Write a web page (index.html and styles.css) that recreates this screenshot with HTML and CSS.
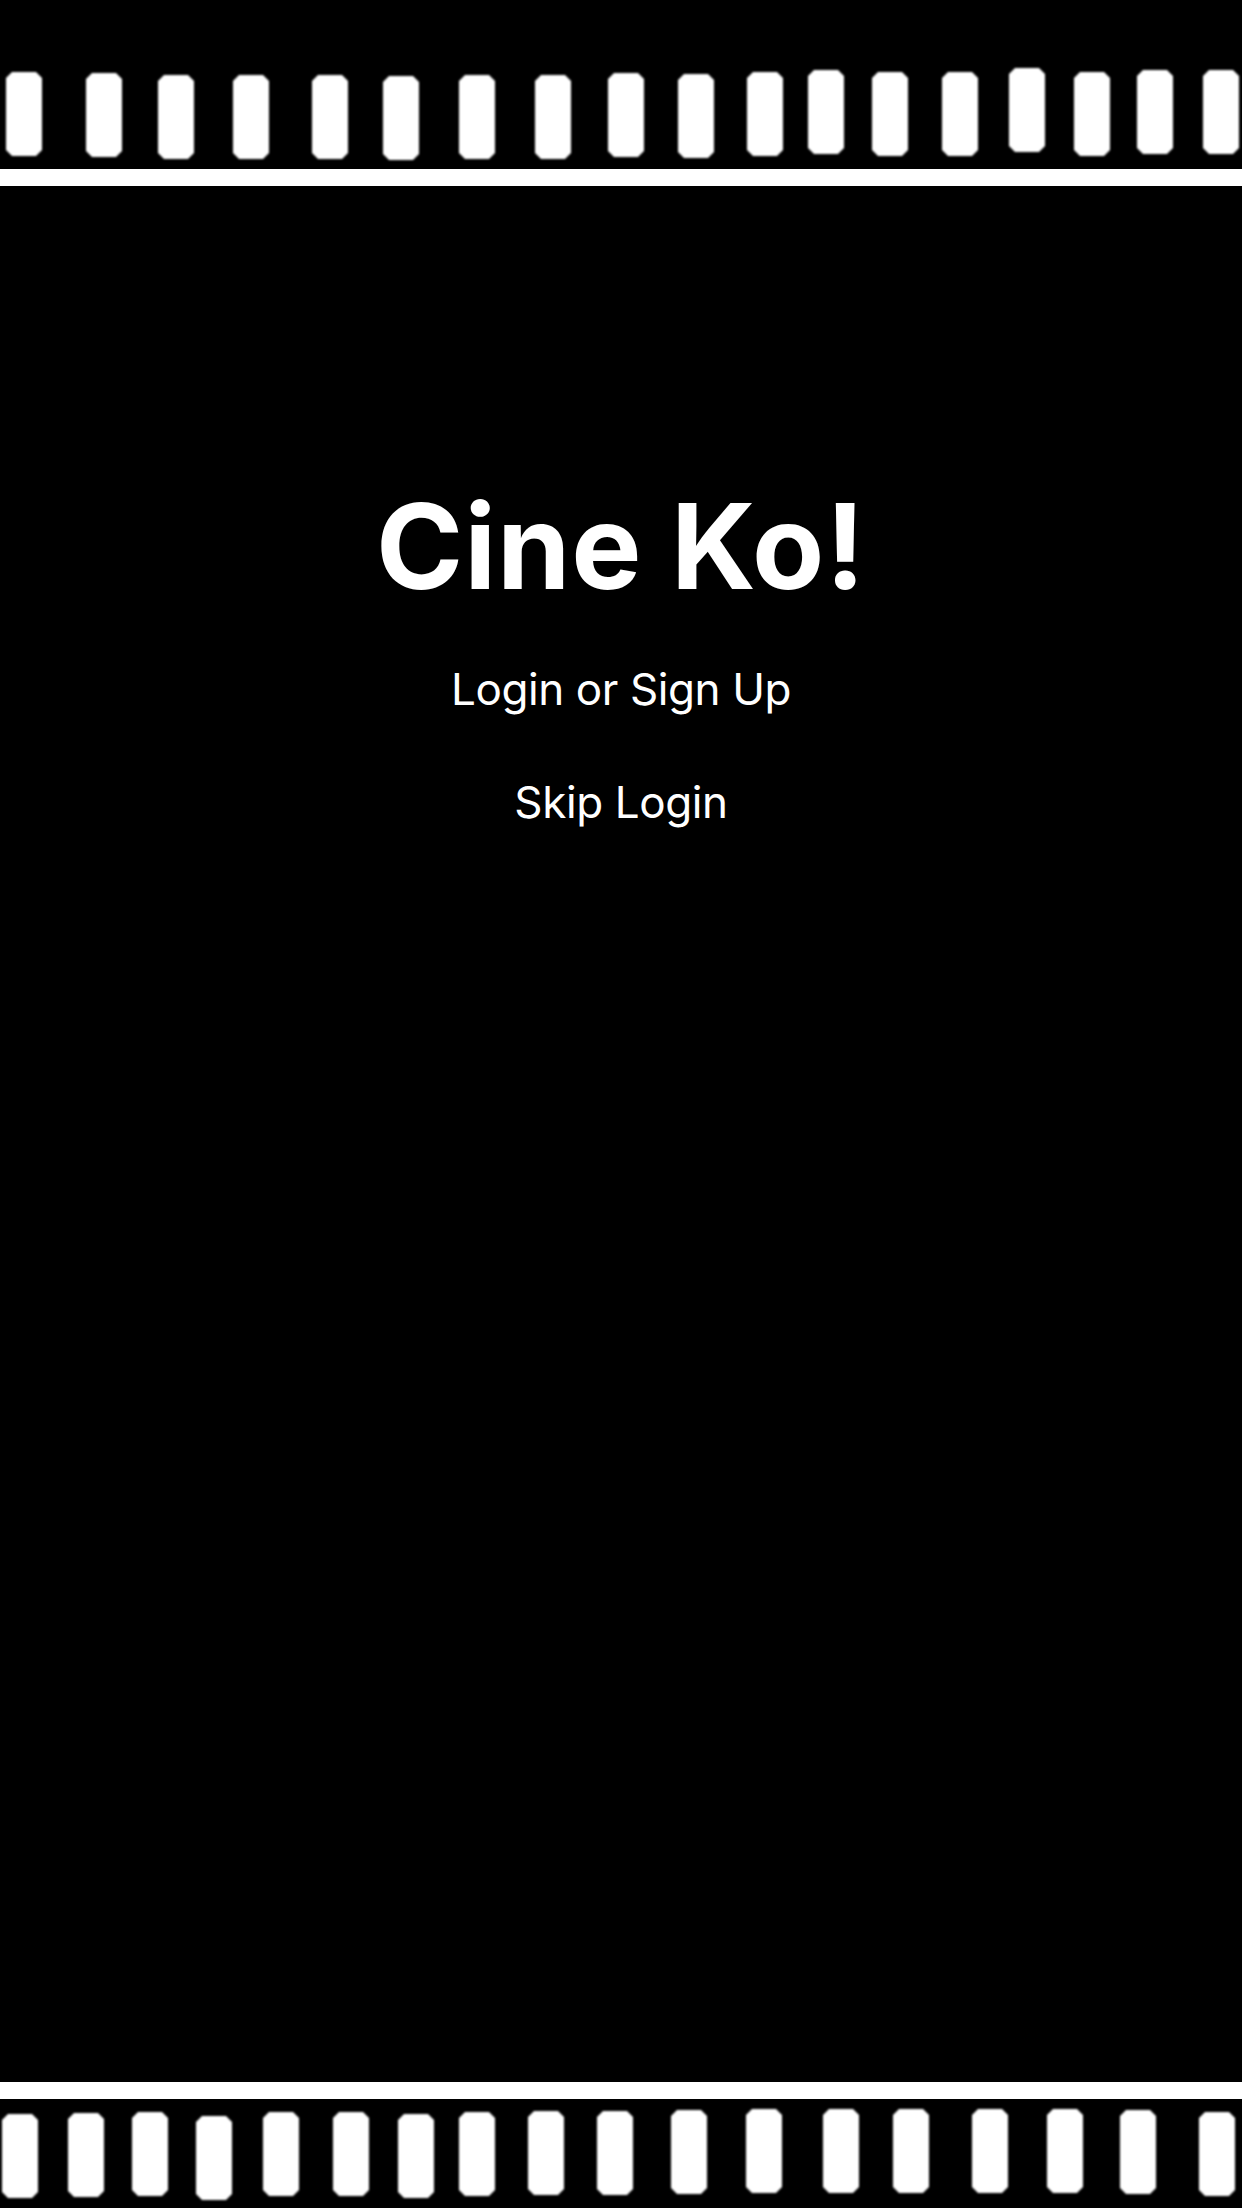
FILE: index.html
```html
<!DOCTYPE html>
<html lang="en">
<head>
<meta charset="utf-8">
<title>Cine Ko!</title>
<link rel="stylesheet" href="styles.css">
</head>
<body>
<div class="screen">
  <svg class="strip strip-top" width="1242" height="186" viewBox="0 0 1242 186" xmlns="http://www.w3.org/2000/svg">
    <defs>
      <filter id="soft" x="-10%" y="-10%" width="120%" height="120%">
        <feGaussianBlur stdDeviation="0.9"/>
      </filter>
      <polygon id="hole" points="6,0 30,0 36,6 36,78 30,84 6,84 0,78 0,6" fill="#fff"/>
    </defs>
    <g filter="url(#soft)">
      <use href="#hole" x="6" y="72"/>
      <use href="#hole" x="86" y="73"/>
      <use href="#hole" x="158" y="75"/>
      <use href="#hole" x="233" y="75"/>
      <use href="#hole" x="312" y="75"/>
      <use href="#hole" x="383" y="76"/>
      <use href="#hole" x="459" y="75"/>
      <use href="#hole" x="535" y="75"/>
      <use href="#hole" x="608" y="73"/>
      <use href="#hole" x="678" y="74"/>
      <use href="#hole" x="747" y="72"/>
      <use href="#hole" x="808" y="70"/>
      <use href="#hole" x="872" y="72"/>
      <use href="#hole" x="942" y="72"/>
      <use href="#hole" x="1009" y="68"/>
      <use href="#hole" x="1074" y="72"/>
      <use href="#hole" x="1137" y="70"/>
      <use href="#hole" x="1203" y="70"/>
    </g>
    <rect x="0" y="169" width="1242" height="17" fill="#fff"/>
  </svg>

  <main class="content">
    <h1 class="title">Cine Ko!</h1>
    <a class="action action-login" href="#">Login or Sign Up</a>
    <a class="action action-skip" href="#">Skip Login</a>
  </main>

  <svg class="strip strip-bottom" width="1242" height="126" viewBox="0 0 1242 126" xmlns="http://www.w3.org/2000/svg">
    <defs>
      <filter id="soft2" x="-10%" y="-10%" width="120%" height="120%">
        <feGaussianBlur stdDeviation="0.9"/>
      </filter>
      <polygon id="hole2" points="6,0 30,0 36,6 36,78 30,84 6,84 0,78 0,6" fill="#fff"/>
    </defs>
    <rect x="0" y="0" width="1242" height="17" fill="#fff"/>
    <g filter="url(#soft2)">
      <use href="#hole2" x="2" y="32"/>
      <use href="#hole2" x="68" y="31"/>
      <use href="#hole2" x="132" y="30"/>
      <use href="#hole2" x="196" y="34"/>
      <use href="#hole2" x="263" y="30"/>
      <use href="#hole2" x="333" y="30"/>
      <use href="#hole2" x="398" y="32"/>
      <use href="#hole2" x="459" y="30"/>
      <use href="#hole2" x="528" y="29"/>
      <use href="#hole2" x="597" y="29"/>
      <use href="#hole2" x="671" y="28"/>
      <use href="#hole2" x="746" y="27"/>
      <use href="#hole2" x="823" y="27"/>
      <use href="#hole2" x="893" y="27"/>
      <use href="#hole2" x="972" y="27"/>
      <use href="#hole2" x="1047" y="27"/>
      <use href="#hole2" x="1120" y="28"/>
      <use href="#hole2" x="1199" y="30"/>
    </g>
  </svg>
</div>
</body>
</html>
```

FILE: styles.css
```css
html, body {
  margin: 0;
  padding: 0;
  background: #000;
}

body {
  width: 1242px;
  height: 2208px;
  overflow: hidden;
  font-family: "Inter", "Liberation Sans", sans-serif;
  color: #fff;
}

.screen {
  display: flex;
  flex-direction: column;
  width: 1242px;
  height: 2208px;
  background: #000;
}

.strip {
  display: block;
  flex: none;
}

.content {
  flex: 1;
  display: flex;
  flex-direction: column;
  align-items: center;
  padding-top: 301px;
}

.title {
  margin: 0;
  font-size: 118px;
  line-height: 118px;
  font-weight: 700;
  letter-spacing: 0.8px;
  color: #fff;
}

.action {
  display: block;
  font-size: 44px;
  line-height: 44px;
  font-weight: 400;
  letter-spacing: -0.4px;
  color: #fff;
  text-decoration: none;
}

.action-login {
  margin-top: 62px;
}

.action-skip {
  margin-top: 69px;
}
```
